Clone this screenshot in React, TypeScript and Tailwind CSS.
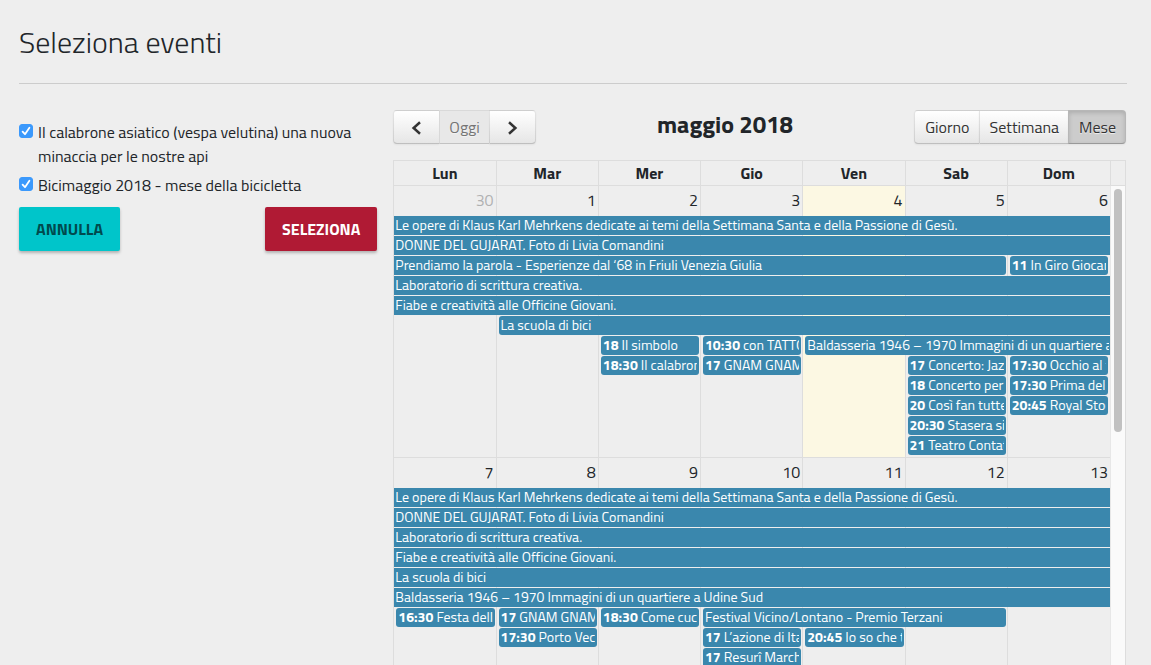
import { useState } from "react";

type CalendarEvent = {
  day: number;
  span?: number;
  row: number;
  time?: string;
  title: string;
  fromBefore?: boolean;
  goesOn?: boolean;
};

type Week = { days: number[]; otherMonth?: number[]; today?: number; events: CalendarEvent[] };

const COL_START = ["col-start-1", "col-start-2", "col-start-3", "col-start-4", "col-start-5", "col-start-6", "col-start-7"];
const COL_SPAN = ["", "col-span-1", "col-span-2", "col-span-3", "col-span-4", "col-span-5", "col-span-6", "col-span-7"];
// Row 1 of a week holds the day numbers, so event rows begin at grid row 2.
const ROW_START = [
  "row-start-1", "row-start-2", "row-start-3", "row-start-4", "row-start-5", "row-start-6", "row-start-7",
  "row-start-8", "row-start-9", "row-start-10", "row-start-11", "row-start-12", "row-start-13",
];

const DAY_NAMES = ["Lun", "Mar", "Mer", "Gio", "Ven", "Sab", "Dom"];

const OPERE = "Le opere di Klaus Karl Mehrkens dedicate ai temi della Settimana Santa e della Passione di Gesù.";
const IMMAGINI = "Baldasseria 1946 – 1970 Immagini di un quartiere a Udine Sud";

const WEEKS: Week[] = [
  {
    days: [30, 1, 2, 3, 4, 5, 6],
    otherMonth: [0],
    today: 4,
    events: [
      { day: 0, span: 7, row: 1, title: OPERE, fromBefore: true, goesOn: true },
      { day: 0, span: 7, row: 2, title: "DONNE DEL GUJARAT. Foto di Livia Comandini", fromBefore: true, goesOn: true },
      { day: 0, span: 6, row: 3, title: "Prendiamo la parola - Esperienze dal ‘68 in Friuli Venezia Giulia", fromBefore: true },
      { day: 6, row: 3, time: "11", title: "In Giro Giocando" },
      { day: 0, span: 7, row: 4, title: "Laboratorio di scrittura creativa.", fromBefore: true, goesOn: true },
      { day: 0, span: 7, row: 5, title: "Fiabe e creatività alle Officine Giovani.", fromBefore: true, goesOn: true },
      { day: 1, span: 6, row: 6, title: "La scuola di bici", goesOn: true },
      { day: 2, row: 7, time: "18", title: "Il simbolo" },
      { day: 3, row: 7, time: "10:30", title: "con TATTO" },
      { day: 4, span: 3, row: 7, title: IMMAGINI, goesOn: true },
      { day: 2, row: 8, time: "18:30", title: "Il calabron" },
      { day: 3, row: 8, time: "17", title: "GNAM GNAM" },
      { day: 5, row: 8, time: "17", title: "Concerto: Jazz" },
      { day: 6, row: 8, time: "17:30", title: "Occhio al film" },
      { day: 5, row: 9, time: "18", title: "Concerto per" },
      { day: 6, row: 9, time: "17:30", title: "Prima del" },
      { day: 5, row: 10, time: "20", title: "Così fan tutte" },
      { day: 6, row: 10, time: "20:45", title: "Royal Stock" },
      { day: 5, row: 11, time: "20:30", title: "Stasera si" },
      { day: 5, row: 12, time: "21", title: "Teatro Contat" },
    ],
  },
  {
    days: [7, 8, 9, 10, 11, 12, 13],
    events: [
      { day: 0, span: 7, row: 1, title: OPERE, fromBefore: true, goesOn: true },
      { day: 0, span: 7, row: 2, title: "DONNE DEL GUJARAT. Foto di Livia Comandini", fromBefore: true, goesOn: true },
      { day: 0, span: 7, row: 3, title: "Laboratorio di scrittura creativa.", fromBefore: true, goesOn: true },
      { day: 0, span: 7, row: 4, title: "Fiabe e creatività alle Officine Giovani.", fromBefore: true, goesOn: true },
      { day: 0, span: 7, row: 5, title: "La scuola di bici", fromBefore: true, goesOn: true },
      { day: 0, span: 7, row: 6, title: IMMAGINI, fromBefore: true, goesOn: true },
      { day: 0, row: 7, time: "16:30", title: "Festa delle" },
      { day: 1, row: 7, time: "17", title: "GNAM GNAM" },
      { day: 2, row: 7, time: "18:30", title: "Come cucin" },
      { day: 3, span: 3, row: 7, title: "Festival Vicino/Lontano - Premio Terzani" },
      { day: 1, row: 8, time: "17:30", title: "Porto Vecc" },
      { day: 3, row: 8, time: "17", title: "L’azione di Ital" },
      { day: 4, row: 8, time: "20:45", title: "Io so che tu" },
      { day: 3, row: 9, time: "17", title: "Resurî March" },
    ],
  },
];

const CHOICES = [
  { id: "calabrone", label: "Il calabrone asiatico (vespa velutina) una nuova minaccia per le nostre api" },
  { id: "bicimaggio", label: "Bicimaggio 2018 - mese della bicicletta" },
];

function Choice({ id, label }: { id: string; label: string }) {
  return (
    <li className="flex items-start gap-[5px]">
      <span className="mt-1 grid shrink-0">
        <input
          id={id}
          type="checkbox"
          defaultChecked
          className="peer col-start-1 row-start-1 size-[14px] appearance-none rounded-[3px] border border-[#b5b5b5] bg-white checked:border-[#3b99fc] checked:bg-[#3b99fc]"
        />
        <svg
          viewBox="0 0 14 14"
          className="pointer-events-none invisible col-start-1 row-start-1 size-[14px] peer-checked:visible"
          fill="none"
          stroke="white"
          strokeWidth="1.8"
          strokeLinecap="round"
          strokeLinejoin="round"
          aria-hidden="true"
        >
          <path d="M3.6 7.6 6 10.2 10.4 3.8" />
        </svg>
      </span>
      <label htmlFor={id}>{label}</label>
    </li>
  );
}

const RAISED =
  "border-[#0000001a] border-b-[#00000040] bg-linear-to-b from-white to-[#e6e6e6] text-[#333] shadow-[inset_0_1px_0_#ffffff33,0_1px_2px_#0000000d]";
const PRESSED = "border-[#0000001a] border-b-[#00000040] bg-[#ccc] text-[#333] shadow-[inset_0_2px_4px_#00000026,0_1px_2px_#0000000d]";
const BUTTON =
  "flex h-[34px] items-center justify-center border text-shadow-[0_1px_1px_#ffffffbf] first:rounded-l last:rounded-r not-last:border-r-0";

function Arrow({ d }: { d: string }) {
  return (
    <svg viewBox="0 0 27 16" className="h-4 w-[27px]" fill="none" stroke="currentColor" strokeWidth="2.5" aria-hidden="true">
      <path d={d} />
    </svg>
  );
}

function Toolbar() {
  const [view, setView] = useState("Mese");
  return (
    <div className="mb-4 flex items-start justify-between">
      <div className="flex">
        <button type="button" aria-label="Precedente" className={`${BUTTON} px-[9px] ${RAISED}`}>
          <Arrow d="M17 3.2 10.6 9 17 14.8" />
        </button>
        <button type="button" disabled className={`${BUTTON} border-[#0000001a] border-b-[#00000040] bg-[#e6e6e6] px-[9px] text-[#333] opacity-65`}>
          Oggi
        </button>
        <button type="button" aria-label="Successivo" className={`${BUTTON} px-[9px] ${RAISED}`}>
          <Arrow d="M10 3.2 16.4 9 10 14.8" />
        </button>
      </div>
      <h2 className="text-2xl leading-7 font-bold">maggio 2018</h2>
      <div className="flex">
        {["Giorno", "Settimana", "Mese"].map((name) => (
          <button key={name} type="button" onClick={() => setView(name)} className={`${BUTTON} pr-[9px] pl-[10px] ${view === name ? PRESSED : RAISED}`}>
            {name}
          </button>
        ))}
      </div>
    </div>
  );
}

function EventBar({ event }: { event: CalendarEvent }) {
  const start = event.fromBefore ? "pl-px" : "ml-[2px] rounded-l-[3px] pl-[2px]";
  const end = event.goesOn ? "pr-px" : "mr-[2px] rounded-r-[3px] pr-[2px]";
  return (
    <a
      href="#"
      className={`z-10 mb-px min-w-0 bg-[#3a87ad] text-sm leading-[17px] text-white ${COL_START[event.day]} ${COL_SPAN[event.span ?? 1]} ${ROW_START[event.row]} ${start} ${end}`}
    >
      <span className="block overflow-x-clip whitespace-nowrap">
        {event.time && <b>{event.time} </b>}
        {event.title}
      </span>
    </a>
  );
}

function WeekRow({ week }: { week: Week }) {
  return (
    <tr className="grid auto-rows-[20px] grid-cols-7 grid-rows-[30px] border-b border-[#ddd] pb-px">
      {week.days.map((day, i) => (
        <td key={day} className="group contents">
          <div
            className={`row-start-1 row-end-[14] -mb-px border-[#ddd] pr-[2px] text-right leading-7 group-not-last:border-r ${COL_START[i]} ${day === week.today ? "bg-[#fcf8e3]" : ""}`}
          >
            <span className={week.otherMonth?.includes(i) ? "opacity-30" : ""}>{day}</span>
          </div>
          {week.events.filter((e) => e.day === i).map((e) => (
            <EventBar key={e.row} event={e} />
          ))}
        </td>
      ))}
    </tr>
  );
}

function Calendar() {
  return (
    <table className="flex min-h-0 flex-1 flex-col border border-b-0 border-[#ddd]">
      <thead className="block border-b border-[#ddd]">
        <tr className="flex">
          <td className="grid flex-1 grid-cols-7 p-0" role="presentation">
            {DAY_NAMES.map((name) => (
              <span key={name} role="columnheader" className="border-[#ddd] text-center leading-6 font-bold not-last:border-r">
                {name}
              </span>
            ))}
          </td>
          <td className="w-[15px] border-l border-[#ddd]" />
        </tr>
      </thead>
      <tbody className="flex min-h-0 flex-1">
        <tr className="flex min-h-0 flex-1">
          <td className="min-w-0 flex-1 overflow-hidden p-0">
            <table className="block">
              <tbody className="block">
                {WEEKS.map((week) => (
                  <WeekRow key={week.days[0]} week={week} />
                ))}
              </tbody>
            </table>
          </td>
          <td className="flex w-[15px] justify-center border-l border-[#e7e7e7] bg-[#fafafa] py-[3px]">
            <div className="h-[243px] w-2 rounded-full bg-[#c1c1c1]" />
          </td>
        </tr>
      </tbody>
    </table>
  );
}

export default function App() {
  return (
    <main className="flex h-screen flex-col overflow-hidden bg-[#eee] pt-6 pr-6 pl-[19px] font-['Titillium_Web',Lato,sans-serif] text-base text-[#212529]">
      <h1 className="text-3xl leading-9 font-light">Seleziona eventi</h1>
      <hr className="mt-[23px] mb-[26px] border-[#ccc]" />
      <div className="grid min-h-0 flex-1 grid-cols-3 gap-4 pr-px">
        <form className="pt-[10px]">
          <ul className="flex flex-col gap-[5px]">
            {CHOICES.map((choice) => (
              <Choice key={choice.id} {...choice} />
            ))}
          </ul>
          <div className="mt-[10px] flex justify-between">
            <button type="button" className="h-11 rounded-[2px] bg-[#00c5ca] px-[17px] font-bold text-[#004a4d] shadow-[0_2px_3px_#00000040]">
              ANNULLA
            </button>
            <button type="button" className="h-11 rounded-[2px] bg-[#b01a34] px-[17px] font-bold text-white shadow-[0_2px_3px_#00000040]">
              SELEZIONA
            </button>
          </div>
        </form>
        <section className="col-span-2 flex min-h-0 flex-col">
          <Toolbar />
          <Calendar />
        </section>
      </div>
    </main>
  );
}
